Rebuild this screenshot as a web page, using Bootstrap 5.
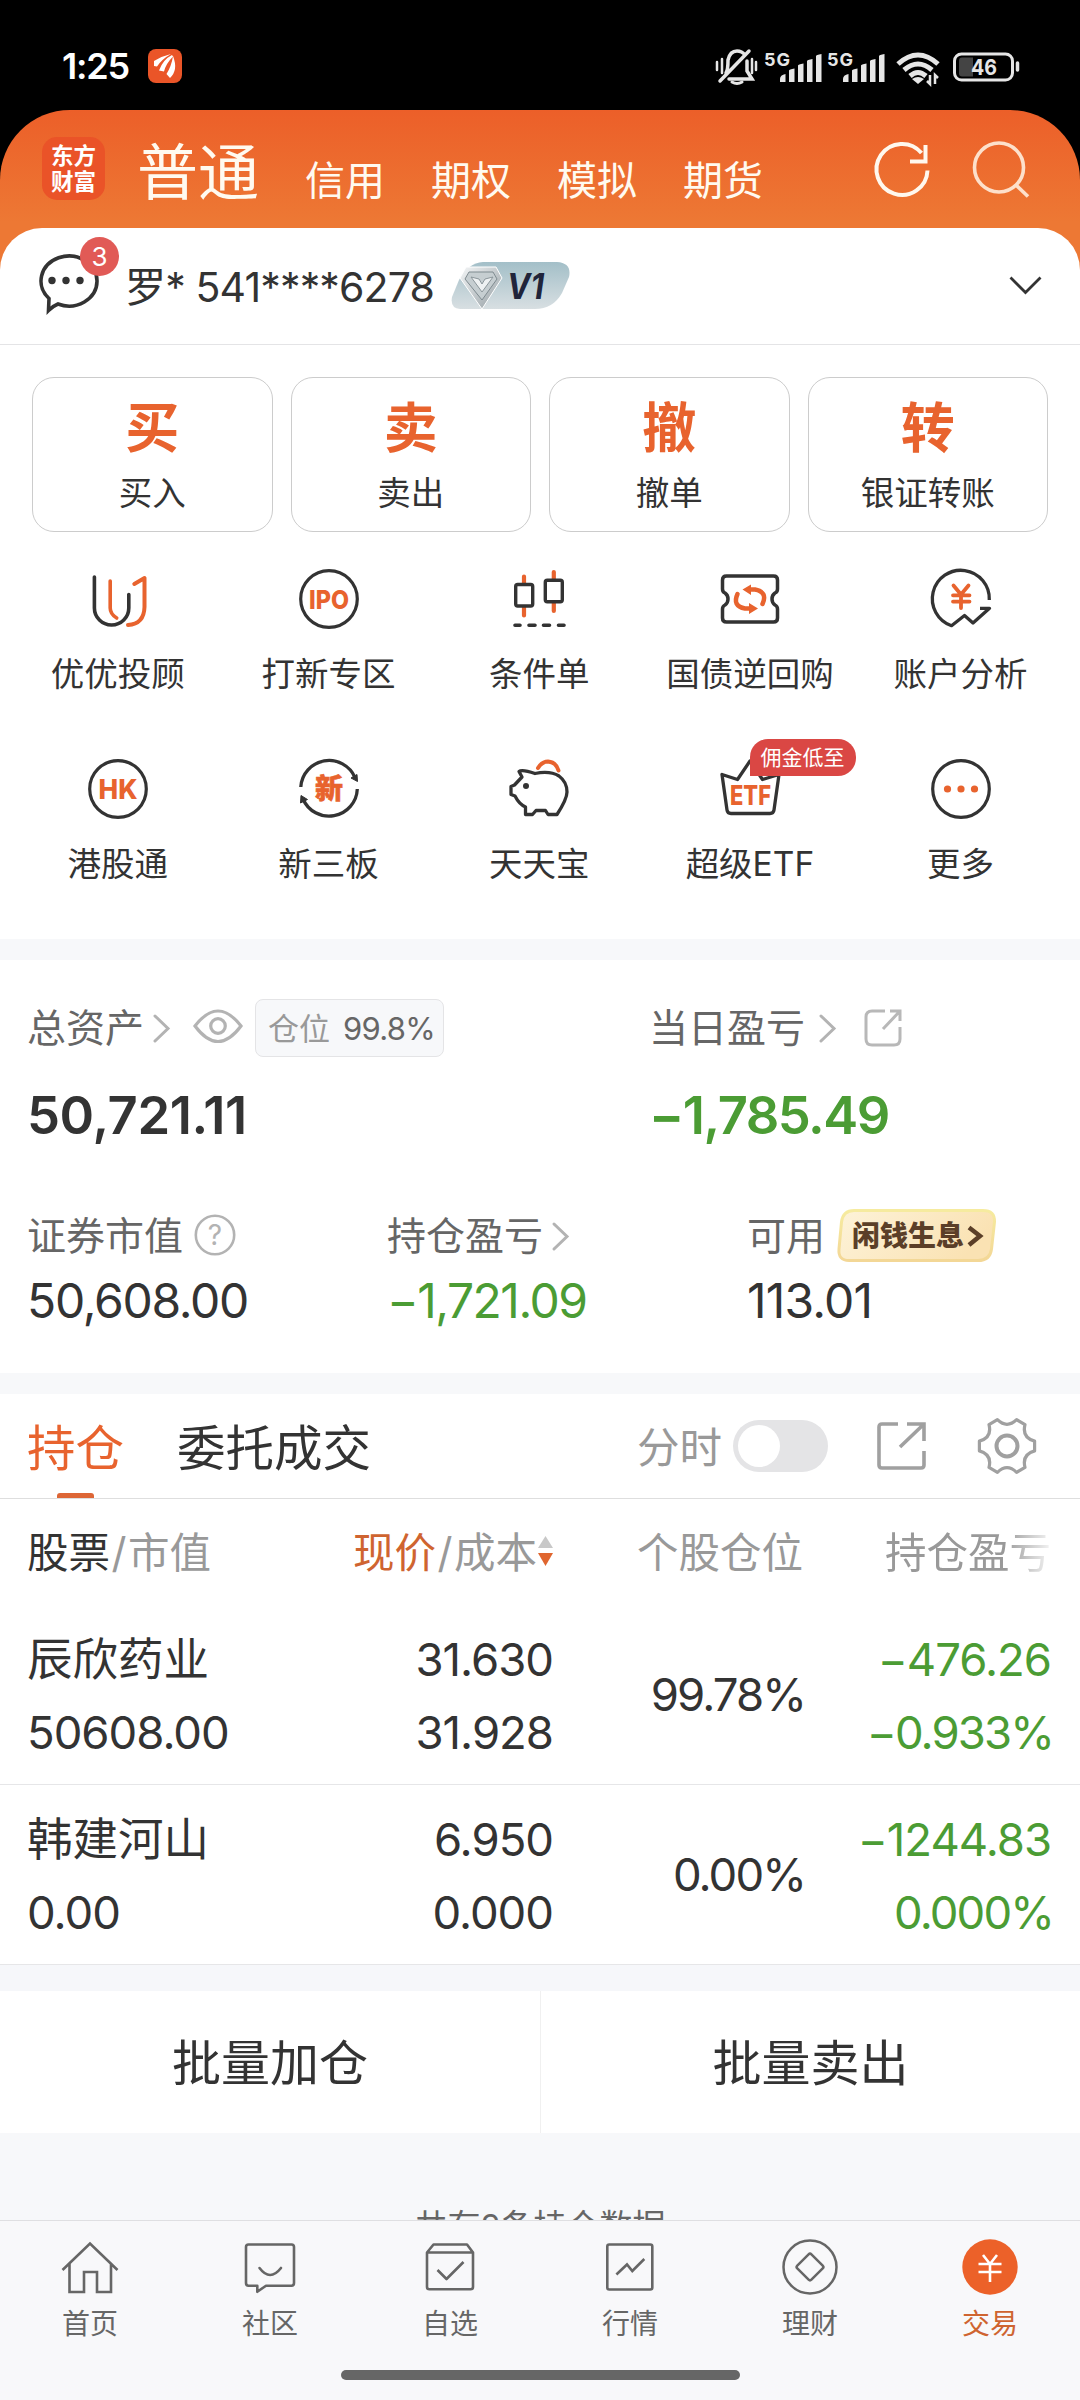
<!DOCTYPE html>
<html lang="zh-CN">
<head>
<meta charset="utf-8">
<meta name="viewport" content="width=device-width, initial-scale=1">
<title>东方财富 交易</title>
<link href="https://cdn.jsdelivr.net/npm/bootstrap@5.3.0/dist/css/bootstrap.min.css" rel="stylesheet">
<style>
  :root{--ink:#333;--mid:#666;--pale:#999;--orange:#e8632e;--green:#4b9c34;--mist:#f7f8fa}
  body{margin:0;background:#000;color:var(--ink);font-family:Inter,"Noto Sans CJK SC",sans-serif;line-height:1.2}
  svg{display:block;flex:none;overflow:visible}
  .screen{width:1080px;height:2400px;overflow:hidden}
  .txt-mid{color:var(--mid)} .txt-pale{color:var(--pale)} .txt-orange{color:var(--orange)} .txt-green{color:var(--green)}
  .statusbar{height:110px;padding:22px 61px 0 62px;color:#e6e6e6}
  .clock{font-size:36px;font-weight:600;color:#fff;width:86px;letter-spacing:-1.2px;padding-top:2px}
  .app-shell{background:linear-gradient(#ec5f29 0,#ed7834 112px,#ed7834 100%);border-radius:70px 70px 0 0}
  .topbar{height:118px;padding:0 50px 0 42px}
  .brand{width:63px;height:63px;margin-top:-1px;border-radius:15px;background:#ea5328;color:#fff;font-weight:700;font-size:22.5px;line-height:26px;padding-top:6px}
  .modes{color:#fffaf0;font-size:40px;line-height:70px;margin-left:32px;padding-top:16px;gap:46px}
  .modes .current{font-size:61px}
  .sheet{border-radius:42px 42px 0 0}
  .account{height:117px;padding:0 38px;border-bottom:1px solid #e4e4e6}
  .acct-no{font-size:41px;margin-left:26px;letter-spacing:-.85px;padding-top:3px}
  .unread{left:42px;top:-18px;width:39px;height:39px;background:#e15a56;color:#fff;font-size:26px;line-height:39px}
  .quick{padding:32px 32px 0;gap:18px}
  .quick-card{height:155px;border:1px solid #ccc;border-radius:22px;padding-top:20px}
  .quick-card b{font-size:54px;line-height:62px;color:var(--orange)}
  .quick-card span{font-size:33.5px;line-height:40px;margin-top:13px}
  .tools{padding:35px 12.5px 0;height:407px}
  .tool{width:210.7px;height:190.5px}
  .tool span.name{font-size:33.5px;line-height:40px;margin-top:23px;white-space:nowrap}
  .promo{left:105px;top:-18px;width:106px;height:37px;border-radius:18px 18px 18px 0;background:#da4744;color:#fff;font-size:21px;line-height:37px}
  .band{background:var(--mist);height:21px}
  .assets{height:414px;padding:38px 28px 0 27px}
  .lbl{font-size:39px;height:60px;white-space:nowrap;padding-top:1px}
  .big{font-size:52.5px;font-weight:600;line-height:60px;margin-top:27px;letter-spacing:-.4px}
  .val{font-size:48px;line-height:56px;margin-top:7px;letter-spacing:-1.3px}
  .position-box{height:58px;width:189px;border:1px solid #e4e4e6;border-radius:8px;background:var(--mist);font-size:31px;margin-left:12px;padding-left:12px}
  .fund{width:159px;height:53px}
  .tabs{height:105px;padding:0 43px 0 27px;border-bottom:1px solid #dedede}
  .tab-item{font-size:48.5px;line-height:104px;padding-top:3px;height:104px}
  .tab-item.on::after{content:"";position:absolute;left:30px;bottom:0;width:37px;height:5px;border-radius:3px 3px 0 0;background:#dd6636}
  .toggle{width:95px;height:52px;border-radius:26px;background:#e4e4e6;margin-left:11px;padding:5px}
  .toggle i{display:block;width:42px;height:42px;border-radius:50%;background:#fff}
  .grid-row{display:grid;grid-template-columns:271px 255px 250px 248px;padding:0 29px 0 27px}
  .thead-row{height:106px;font-size:41.5px;align-items:center;white-space:nowrap;padding-top:3px}
  .slash{margin:0 1.5px}
  .fade-r{-webkit-mask-image:linear-gradient(90deg,#000 72%,transparent 103%);mask-image:linear-gradient(90deg,#000 72%,transparent 103%)}
  .hold{height:180px;font-size:45.5px;line-height:73.5px;border-bottom:1px solid #e6e6e8;padding-top:18px}
  .hold .num{letter-spacing:-1px}
  .hold .pct{letter-spacing:-1.9px;margin-right:-2px}
  .batch{height:142px;font-size:49px}
  .batch>div{padding-top:4px}
  .batch>div+div{border-left:1px solid #f0f0f0}
  .foot-note{height:87px;padding-top:73px;font-size:33px;line-height:40px;overflow:hidden}
  .bottom-nav{height:180px;background:#f8f8fa;border-top:1px solid #dfdfe2;padding-top:16px}
  .bottom-nav .item{width:180px;font-size:28px;color:var(--mid)}
  .bottom-nav .item span{line-height:34px;margin-top:10px}
  .home-bar{width:399px;height:10px;border-radius:5px;background:#666;margin-top:29px}
</style>
<script src="https://cdn.jsdelivr.net/npm/bootstrap@5.3.0/dist/js/bootstrap.bundle.min.js"></script>
</head>
<body>
<svg width="0" height="0" class="position-absolute">
  <defs>
    <g id="bars" fill="#e6e6e6"><path d="M0 27v-3q0-4 5.500-5v8zM9 15.500q0-1 5.500-2v13.500h-5.500zM18 10.500q0-1 5.500-2v18.500h-5.500zM27 6q0-1 5.500-2v23h-5.500zM36 1q0-1 5.500-2v28h-5.500z"/></g>
    <path id="chev" d="M2 2l13 12.500L2 27" fill="none" stroke="#b3b3b3" stroke-width="3" stroke-linecap="round"/>
    <linearGradient id="vipbg" x2="0" y2="1"><stop stop-color="#a3bfc8"/><stop offset="1" stop-color="#d8dfe2"/></linearGradient>
    <linearGradient id="gem" x2="1" y2="1"><stop stop-color="#f4f6f7"/><stop offset="1" stop-color="#939da2"/></linearGradient>
    <linearGradient id="gold" x2="1" y2=".3"><stop stop-color="#fdf3d9"/><stop offset="1" stop-color="#fae2b3"/></linearGradient>
    <linearGradient id="goldline" x2="0" y2="1"><stop stop-color="#f6eb9f"/><stop offset="1" stop-color="#f3d796"/></linearGradient>
  </defs>
</svg>

<div class="screen d-flex flex-column">
  <div class="statusbar d-flex align-items-center">
    <div class="clock">1:25</div>
    <svg width="34" height="34" viewBox="0 0 34 34"><rect width="34" height="34" rx="8" fill="#ea5528"/><path fill="#fff" d="M6 12q8-5 17-7-9 5-14 12.500l-3-.500zM11 21.500q4-11 13-15.500l1 1.500q-7 7-9 15zM18.500 25q5-8 6.500-18 5.500 14-3 22z"/></svg>
    <div class="ms-auto d-flex align-items-center">
      <svg width="302" height="36" viewBox="717 47 302 36" fill="none" stroke="#e6e6e6">
        <g stroke-width="3" stroke-linecap="round"><path d="M717 61v8M722 58v14M752 58v14M756 61v8" stroke-width="2.500"/><path d="M726 72q2-3 2-13 2-9 9-9 5 0 8 4M747 60v10l5 8h-23M749 50l-29 30" stroke-width="3.500"/><path d="M732 81q5 3 10 0"/></g>
        <text x="764" y="65" textLength="26" font-size="18" font-weight="700" fill="#e6e6e6" stroke="none">5G</text>
        <text x="827" y="65" textLength="26" font-size="18" font-weight="700" fill="#e6e6e6" stroke="none">5G</text>
        <g stroke="none"><use href="#bars" x="780" y="54"/><use href="#bars" x="843" y="54"/></g>
        <path stroke-width="5" d="M898 63q20-18 40 0M904 69q14-12 28 0M910 75q8-7 16 0"/>
        <path fill="#e6e6e6" stroke="none" d="M912 78q6-4 12 0l-6 5z"/>
        <path stroke-width="2.500" d="M930 74v9l-3-3M935 83v-9l3 3"/>
        <rect x="954.500" y="53" width="58" height="26" rx="7" stroke-width="3"/>
        <path d="M962 56.500h11v19h-11q-3 0-3-3v-13q0-3 3-3z" fill="#444" stroke="none"/>
        <path d="M1017.500 62v7" stroke-width="3.500" stroke-linecap="round"/>
        <text x="971" y="74" textLength="26" lengthAdjust="spacingAndGlyphs" font-size="22" font-weight="700" fill="#e6e6e6" stroke="none">46</text>
      </svg>
    </div>
  </div>

  <div class="app-shell">
    <header class="topbar d-flex align-items-center">
      <div class="brand text-center"><div>东方</div><div>财富</div></div>
      <nav class="modes d-flex align-items-baseline"><span class="current">普通</span><span>信用</span><span>期权</span><span>模拟</span><span>期货</span></nav>
      <svg class="ms-auto" width="56" height="56" viewBox="-1 -1 56 56" fill="none" stroke="#fff8ee" stroke-width="4"><path d="M53.500 28.500a25.500 25.500 0 1 1-6-17.500"/><path d="M51.500 3v16.500H36"/></svg>
      <svg width="56" height="56" viewBox="5 0 56 56" fill="none" stroke="#fde0cb" stroke-width="3.600" style="margin-left:45px"><circle cx="30" cy="26.500" r="24.500"/><path d="M46.500 43.500L59 55.500"/></svg>
    </header>
    <div class="sheet bg-white">
      <div class="account d-flex align-items-center">
        <div class="position-relative">
          <svg width="61" height="61" viewBox="2 2 61 61"><path d="M13 45.500A28 25 0 1 1 22 51Q17 53 12.500 57.500Z" fill="#fff" stroke="#333" stroke-width="3.600"/><g fill="#333"><circle cx="16" cy="27.500" r="3.700"/><circle cx="30" cy="27.500" r="3.700"/><circle cx="44" cy="27.500" r="3.700"/></g></svg>
          <span class="unread position-absolute rounded-circle text-center">3</span>
        </div>
        <span class="acct-no">罗* 541****6278</span>
        <svg width="120" height="48" viewBox="0 0 120 48" style="margin-left:17px">
          <path d="M32 0H106Q121 1 118 15L111 31Q102 47 84 47H9Q-1 46 1 35L8 18Q17 1 32 0Z" fill="url(#vipbg)"/>
          <path d="M15 5H45L51 16 31 47 9 16Z" fill="url(#gem)" stroke="#fff" stroke-width="1"/>
          <path d="M18 10H42L46 17 31 38 14 17Z" fill="#c6ced1" stroke="#7f8b90"/><path d="M20 15l11 15 11-15-8 2-3 5-3-5z" fill="#eef1f2" stroke="#8b969b"/>
          <text x="56" y="37" textLength="37" lengthAdjust="spacingAndGlyphs" font-size="35" font-style="italic" font-weight="700" fill="#20243a">V1</text>
        </svg>
        <svg class="ms-auto" width="33" height="19" viewBox="0 0 33 19" fill="none" stroke="#333" stroke-width="2.800"><path d="M1.500 1.500L16.500 16.500 31.500 1.500"/></svg>
      </div>

      <div class="quick d-flex">
        <div class="quick-card flex-fill w-25 d-flex flex-column align-items-center"><b>买</b><span>买入</span></div>
        <div class="quick-card flex-fill w-25 d-flex flex-column align-items-center"><b>卖</b><span>卖出</span></div>
        <div class="quick-card flex-fill w-25 d-flex flex-column align-items-center"><b>撤</b><span>撤单</span></div>
        <div class="quick-card flex-fill w-25 d-flex flex-column align-items-center"><b>转</b><span>银证转账</span></div>
      </div>

      <div class="tools d-flex flex-wrap align-content-start">
        <div class="tool d-flex flex-column align-items-center">
          <svg width="64" height="64" fill="none" stroke-width="3.600" stroke-linecap="round" stroke-linejoin="round"><path d="M24.200 14V41q0 6 6.500 10" stroke="#e8632e"/><path d="M8.400 10V41a17.200 17 0 0 0 34.400 0V27.500" stroke="#333"/><path d="M48.300 17L58.500 11V40Q58 57 42 58" stroke="#e8632e" stroke-width="4"/></svg>
          <span class="name">优优投顾</span>
        </div>
        <div class="tool d-flex flex-column align-items-center">
          <svg width="64" height="64"><circle cx="32" cy="32" r="28.300" fill="none" stroke="#333" stroke-width="3.200"/><text x="12" y="41.500" textLength="40" lengthAdjust="spacingAndGlyphs" font-size="26" font-weight="800" fill="#e8632e">IPO</text></svg>
          <span class="name">打新专区</span>
        </div>
        <div class="tool d-flex flex-column align-items-center">
          <svg width="64" height="64" fill="none" stroke-width="3.400" stroke-linecap="round"><path d="M17 9.500V17M17 40V48.500M46.800 5V13M46.800 36V44" stroke="#e8632e" stroke-width="4.200"/><rect x="8.700" y="17.500" width="17" height="21.500" rx="2" stroke="#333"/><rect x="38.300" y="13.200" width="17" height="21.500" rx="2" stroke="#333"/><path d="M8 58.200h5M22 58.200h6M36.500 58.200h6M51.500 58.200h5.500" stroke="#333" stroke-width="3.600"/></svg>
          <span class="name">条件单</span>
        </div>
        <div class="tool d-flex flex-column align-items-center">
          <svg width="64" height="64" fill="none" stroke-linejoin="round"><path d="M8.500 9H55.500Q59.500 9 59.500 13V22Q59.500 25 57 26Q54 28 54 32T57 38Q59.500 39 59.500 42V51Q59.500 55 55.500 55H8.500Q4.500 55 4.500 51V42Q4.500 39 7 38Q10 36 10 32T7 26Q4.500 25 4.500 22V13Q4.500 9 8.500 9Z" stroke="#333" stroke-width="3.500"/><g stroke="#e8632e" stroke-width="4.500" stroke-linecap="round"><path d="M19.500 27Q14 39 27 41.500H33"/><path d="M44.500 37Q50 25 37 22.500H31"/></g><path d="M33 17.500V28L24.500 22.500ZM31 36V47L40 41.500Z" fill="#e8632e"/></svg>
          <span class="name">国债逆回购</span>
        </div>
        <div class="tool d-flex flex-column align-items-center">
          <svg width="64" height="64" fill="none" stroke-linejoin="round"><path d="M60.300 33A28.500 28.500 0 1 0 22.500 58.700L35.500 48.500 44 56 60.500 41.300H51" stroke="#333" stroke-width="3.300"/><path d="M24.500 18.500L32 27.500 39.500 18.500M24 28.300H40.500M24 34.600H40.500M32 28V41" stroke="#e8632e" stroke-width="3.800" stroke-linecap="round"/></svg>
          <span class="name">账户分析</span>
        </div>
        <div class="tool d-flex flex-column align-items-center">
          <svg width="64" height="64"><circle cx="32" cy="32" r="28.300" fill="none" stroke="#333" stroke-width="3.200"/><text x="12.500" y="41.500" textLength="39" lengthAdjust="spacingAndGlyphs" font-size="26.500" font-weight="800" fill="#e8632e">HK</text></svg>
          <span class="name">港股通</span>
        </div>
        <div class="tool d-flex flex-column align-items-center">
          <svg width="64" height="64"><g fill="none" stroke="#333" stroke-width="3.300"><path d="M3.800 30A28.300 28.300 0 0 1 58 20.500"/><path d="M60.300 32A28.300 28.300 0 0 1 6 42"/></g><path d="M54 21L60 17.500 60.500 24.500ZM10.500 42.500L3.500 46 4 38.500Z" fill="#333" stroke="#333"/><text x="18" y="42" font-size="28" font-weight="800" fill="#e8632e" stroke="#e8632e" stroke-width=".6">新</text></svg>
          <span class="name">新三板</span>
        </div>
        <div class="tool d-flex flex-column align-items-center">
          <svg width="64" height="64" fill="none" stroke-linejoin="round"><path d="M31 11Q35 4.500 41 4.500 49 5 51.500 13.500" stroke="#e8632e" stroke-width="4" stroke-linecap="round"/><path d="M12 14.500Q15 12 28 16.500 43 13.500 52 19 60 25 60 35 60 42 50 57.500H41L38.500 53.500H29L25.500 57.500H18.500V50Q12 47 8 39L4 37.500V29.500L7.500 28 15 20Z" stroke="#333" stroke-width="3.300" fill="#fff"/><circle cx="19" cy="29" r="3" fill="#333"/></svg>
          <span class="name">天天宝</span>
        </div>
        <div class="tool d-flex flex-column align-items-center position-relative">
          <svg width="64" height="64"><path d="M4 17.500L19.500 22.500 32 4 44.500 22.500 61 17.500 56 53Q55.500 56.500 52 56.500H13Q9.500 56.500 9 53Z" fill="none" stroke="#333" stroke-width="3.300" stroke-linejoin="round"/><text x="12" y="47.700" textLength="41" lengthAdjust="spacingAndGlyphs" font-size="27" font-weight="800" fill="#e8632e">ETF</text></svg>
          <span class="name">超级ETF</span>
          <span class="promo position-absolute text-center">佣金低至</span>
        </div>
        <div class="tool d-flex flex-column align-items-center">
          <svg width="64" height="64"><circle cx="32" cy="32" r="28.300" fill="none" stroke="#333" stroke-width="3.200"/><g fill="#e8632e"><circle cx="18.500" cy="32" r="3.600"/><circle cx="32" cy="32" r="3.600"/><circle cx="45.500" cy="32" r="3.600"/></g></svg>
          <span class="name">更多</span>
        </div>
      </div>
    </div>
  </div>

  <div class="band"></div>
  <section class="assets bg-white">
    <div class="d-flex">
      <div style="width:622px">
        <div class="lbl d-flex align-items-center txt-mid">总资产<svg width="17" height="29" style="margin-left:9px"><use href="#chev"/></svg>
          <svg width="50" height="36" viewBox="0 1 50 36" style="margin-left:23px" fill="none" stroke="#b3b3b3" stroke-width="3.200"><path d="M2 17Q25-13 48 17 25 48 2 17Z"/><circle cx="25" cy="17" r="7.300"/></svg>
          <span class="position-box d-flex align-items-center"><span class="txt-pale">仓位</span><span style="margin-left:13px;letter-spacing:-.7px">99.8%</span></span></div>
        <div class="big">50,721.11</div>
      </div>
      <div>
        <div class="lbl d-flex align-items-center txt-mid">当日盈亏<svg width="17" height="29" style="margin-left:14px"><use href="#chev"/></svg>
          <svg width="38" height="38" style="margin-left:28px" fill="none" stroke="#b8b8b8" stroke-width="3"><path d="M21 2H8Q2 2 2 8V30Q2 36 8 36H30Q36 36 36 30V18M26 2H36V12M36 2L19 20"/></svg></div>
        <div class="big txt-green" style="letter-spacing:-1.5px">−1,785.49</div>
      </div>
    </div>
    <div class="d-flex" style="margin-top:61px">
      <div style="width:360px">
        <div class="lbl d-flex align-items-center txt-mid">证券市值<svg width="42" height="42" style="margin-left:11px"><circle cx="21" cy="20" r="19.200" fill="none" stroke="#b3b3b3" stroke-width="2.600"/><text x="21" y="30" text-anchor="middle" font-size="28" fill="#b3b3b3">?</text></svg></div>
        <div class="val">50,608.00</div>
      </div>
      <div style="width:360px">
        <div class="lbl d-flex align-items-center txt-mid">持仓盈亏<svg width="17" height="29" style="margin-left:9px"><use href="#chev"/></svg></div>
        <div class="val txt-green" style="letter-spacing:-1.5px">−1,721.09</div>
      </div>
      <div>
        <div class="lbl d-flex align-items-center txt-mid">可用<svg class="fund" viewBox="0 1 159 53" style="margin-left:12px"><path d="M17 1.500H146Q158 1.500 157.500 13L154.500 40Q153 51.500 141 51.500H12Q1 51.500 2 40L4.500 13Q6 1.500 17 1.500Z" fill="url(#gold)" stroke="url(#goldline)" stroke-width="3"/><text x="15" y="37" textLength="112" font-size="28" font-weight="800" fill="#5b3f28">闲钱生息</text><path d="M132 18.500L143 27 132 36" fill="none" stroke="#5b3f28" stroke-width="4.500"/></svg></div>
        <div class="val" style="letter-spacing:-.8px">113.01</div>
      </div>
    </div>
  </section>
  <div class="band"></div>

  <section class="bg-white">
    <div class="tabs d-flex align-items-center">
      <span class="tab-item on position-relative txt-orange">持仓</span>
      <span class="tab-item" style="margin-left:53px">委托成交</span>
      <span class="ms-auto txt-pale" style="font-size:42.5px;padding-top:3px">分时</span>
      <span class="toggle"><i></i></span>
      <svg width="50" height="48" style="margin-left:49px" fill="none" stroke="#a0a0a0" stroke-width="3.600"><path d="M21 2H5Q2 2 2 5V43Q2 46 5 46H44Q47 46 47 43V29M30 2H47V19M47 2L23 25"/></svg>
      <svg width="60" height="60" style="margin-left:50px" fill="none" stroke="#a0a0a0" stroke-width="3.200" stroke-linejoin="round"><path d="M57.600 34.900Q44.700 38.500 48 51.400L39.600 56.300Q30 47 20.400 56.300L12 51.400Q15.300 38.500 2.400 34.900V25.100Q15.300 21.500 12 8.600L20.400 3.700Q30 13 39.600 3.700L48 8.600Q44.700 21.500 57.600 25.100Z"/><circle cx="30" cy="30" r="10.500" stroke-width="4"/></svg>
    </div>
    <div class="grid-row thead-row txt-pale">
      <div><span style="color:#333">股票</span><span class="slash">/</span>市值</div>
      <div class="d-flex align-items-center justify-content-end"><span><span style="color:#cf6430">现价</span><span class="slash">/</span>成本</span><svg width="15" height="32" style="margin-left:1px"><path d="M7.500 -1L15 11H0Z" fill="#c8c8c8"/><path d="M0 16H15L7.500 29Z" fill="#e0662f"/></svg></div>
      <div class="text-end">个股仓位</div>
      <div class="text-end"><span class="fade-r d-inline-block">持仓盈亏</span></div>
    </div>
    <div class="grid-row hold">
      <div>辰欣药业<br><span class="num">50608.00</span></div>
      <div class="text-end num">31.630<br>31.928</div>
      <div class="text-end num pct align-self-center" style="padding-bottom:17px">99.78%</div>
      <div class="text-end num txt-green">−476.26<br><span class="pct">−0.933%</span></div>
    </div>
    <div class="grid-row hold">
      <div>韩建河山<br><span class="num">0.00</span></div>
      <div class="text-end num">6.950<br>0.000</div>
      <div class="text-end num pct align-self-center" style="padding-bottom:17px">0.00%</div>
      <div class="text-end num txt-green">−1244.83<br><span class="pct">0.000%</span></div>
    </div>
  </section>
  <div style="height:26px;background:#f6f7fa;flex:none"></div>
  <div class="batch bg-white d-flex flex-shrink-0">
    <div class="w-50 d-flex align-items-center justify-content-center">批量加仓</div>
    <div class="w-50 d-flex align-items-center justify-content-center">批量卖出</div>
  </div>
  <div class="foot-note text-center txt-mid flex-shrink-0" style="background:#f7f8fa">共有2条持仓数据</div>

  <nav class="bottom-nav flex-shrink-0">
    <div class="d-flex">
      <div class="item d-flex flex-column align-items-center"><svg width="60" height="60" fill="none" stroke="#666" stroke-width="2.600"><path d="M2.500 33L30 6.500 57.500 33M9.500 27V55H24V35H37V55H51V27"/></svg><span>首页</span></div>
      <div class="item d-flex flex-column align-items-center"><svg width="60" height="60" fill="none" stroke="#666" stroke-width="2.600" stroke-linejoin="round"><path d="M8.500 7.500H51.500Q54 7.500 54 10V46Q54 48.700 51.500 48.700H26L17.300 54.800V48.700H8.500Q6 48.700 6 46V10Q6 7.500 8.500 7.500Z"/><path d="M19.500 31Q30 45 41 31" stroke-linecap="round"/></svg><span>社区</span></div>
      <div class="item d-flex flex-column align-items-center"><svg width="60" height="60" viewBox="-.5 0 60 60" fill="none" stroke="#666" stroke-width="2.600" stroke-linejoin="round"><path d="M6.500 15.500L13 7.500H46.500L52.500 15.500V50Q52.500 52.300 50 52.300H9Q6.500 52.300 6.500 50ZH52.500M17 33L26 42 43 25"/></svg><span>自选</span></div>
      <div class="item d-flex flex-column align-items-center"><svg width="60" height="60" fill="none" stroke="#666" stroke-width="2.600"><rect x="7.300" y="7.500" width="45" height="45" rx="2"/><path d="M16.400 37.500L27 27.500 32.300 34 44.300 22"/></svg><span>行情</span></div>
      <div class="item d-flex flex-column align-items-center"><svg width="60" height="60" fill="none" stroke="#666" stroke-width="2.500"><circle cx="30" cy="30" r="26.500"/><rect x="20" y="20" width="20" height="20" rx="2" transform="rotate(45 30 30)"/></svg><span>理财</span></div>
      <div class="item d-flex flex-column align-items-center"><svg width="60" height="60" fill="none" stroke="#fff" stroke-width="2.600"><circle cx="30" cy="30" r="27.700" fill="#ec6129" stroke="none"/><path d="M23 18L30 27 37 18M18.500 27H41.500M18.500 35H41.500M30 27V45"/></svg><span style="color:#cf6430">交易</span></div>
    </div>
    <div class="home-bar mx-auto"></div>
  </nav>
</div>
</body>
</html>
